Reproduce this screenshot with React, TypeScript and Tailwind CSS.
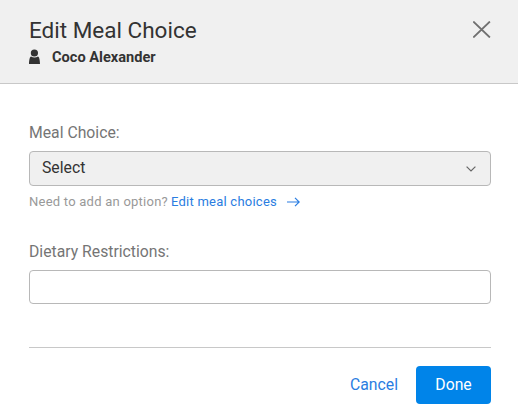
import { useState } from 'react'

function PersonIcon() {
  return (
    <svg width="11" height="16" viewBox="0 0 11 16" fill="currentColor" aria-hidden="true">
      <ellipse cx="5.4" cy="3.9" rx="3.6" ry="3.5" />
      <path d="M2 7.4C4 8.8 7 8.8 9 7.4C10.2 8 10.8 10 11 15H0C.2 10 .8 8 2 7.4Z" />
    </svg>
  )
}

function CloseIcon() {
  return (
    <svg width="18" height="17" viewBox="0 0 18 17" fill="none" stroke="currentColor" strokeWidth="1.8" aria-hidden="true">
      <path d="M.3 .5L16.9 16.5M16.9 .5L.3 16.5" />
    </svg>
  )
}

function ChevronIcon() {
  return (
    <svg width="10" height="6" viewBox="0 0 10 6" fill="none" stroke="currentColor" strokeWidth="1.2" aria-hidden="true">
      <path d="M.6 .6L5 5L9.4 .6" />
    </svg>
  )
}

function ArrowIcon() {
  return (
    <svg width="13" height="10" viewBox="0 0 13 10" fill="none" stroke="currentColor" strokeWidth="1.2" aria-hidden="true">
      <path d="M0 5H12M8 .8L12.2 5L8 9.2" />
    </svg>
  )
}

export default function App() {
  const [restrictions, setRestrictions] = useState('')

  return (
    <div className="h-screen w-full overflow-hidden bg-white font-[Roboto,sans-serif] text-[#333]">
      <header className="flex h-[84px] justify-between border-b border-[#c8c8c8] bg-[#f0f0f0] pl-[29px] pr-[27px]">
        <div className="pt-4">
          <h1 className="text-[22.5px] leading-7">Edit Meal Choice</h1>
          <div className="mt-[3px] flex h-5 items-center gap-3">
            <PersonIcon />
            <span className="text-[14.6px] font-bold leading-5">Coco Alexander</span>
          </div>
        </div>
        <button type="button" aria-label="Close" className="mt-[21px] h-[17px] text-[#707070]">
          <CloseIcon />
        </button>
      </header>

      <main className="pl-[29px] pr-[27px] pt-[39px]">
        <div className="text-[15.75px] leading-5 text-[#757575]">Meal Choice:</div>
        <button
          type="button"
          className="mt-2 flex h-[35px] w-full items-center justify-between rounded-[4px] border border-[#b8b8b8] bg-[#f0f0f0] pl-3 pr-3.5 text-[15.75px] leading-5"
        >
          <span className="pb-px">Select</span>
          <span className="text-[#666]">
            <ChevronIcon />
          </span>
        </button>
        <div className="mt-2 flex h-4 items-center text-[13px] leading-4 tracking-[0.24px] text-[#999]">
          <span>Need to add an option?</span>
          <a href="#" className="ml-[3px] flex items-center gap-2.5 text-[#2a7de1]">
            Edit meal choices
            <ArrowIcon />
          </a>
        </div>

        <label className="mt-8 block text-[15.75px] leading-5 text-[#757575]" htmlFor="restrictions">
          Dietary Restrictions:
        </label>
        <input
          id="restrictions"
          value={restrictions}
          onChange={(e) => setRestrictions(e.target.value)}
          className="mt-2 block h-[34px] w-full rounded-[4px] border border-[#b8b8b8] bg-white px-3"
        />

        <footer className="mt-[43px] flex items-center justify-end border-t border-[#c8c8c8] pt-[18px] text-[15.75px] leading-5">
          <button type="button" className="mr-[18px] text-[#2a7de1]">Cancel</button>
          <button type="button" className="h-[38px] w-[75px] rounded-[4px] bg-[#0084e9] text-white">Done</button>
        </footer>
      </main>
    </div>
  )
}
